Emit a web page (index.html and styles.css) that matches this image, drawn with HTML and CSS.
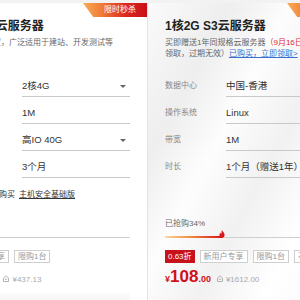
FILE: index.html
```html
<!DOCTYPE html>
<html lang="zh-CN">
<head>
  <meta charset="UTF-8"/>
  <title>云服务器 - 限时秒杀</title>
  <link rel="stylesheet" href="styles.css">
</head>
<body>
  <div class="cards">
    <div class="card card-left">
      <span class="badge">限时秒杀</span>
      <h2 class="title">2核4G云服务器</h2>
      <p class="desc">入门级配置，广泛适用于建站、开发测试等</p>
      <div class="specs">
        <div class="row"><span class="label">配置</span><div class="value select">2核4G<i class="arrow"></i></div></div>
        <div class="row"><span class="label">带宽</span><div class="value">1M</div></div>
        <div class="row"><span class="label">系统盘</span><div class="value select">高IO 40G<i class="arrow"></i></div></div>
        <div class="row"><span class="label">时长</span><div class="value">3个月</div></div>
        <label class="addon"><span class="checkbox"></span>同意并购买<u>主机安全基础版</u></label>
      </div>
      <div class="foot">
        <p class="sold">已抢购0%</p>
        <div class="bar"><span class="fill" style="width:0%"></span></div>
        <div class="tags"><span class="tag">新用户专享</span><span class="tag">限购1台</span></div>
        <div class="price">
          <span class="cur">¥</span><span class="num">48</span><span class="dec">.00</span>
          <span class="save"><svg viewBox="0 0 6 7"><path d="M0.5 3L3 0.8 5.5 3V6.5H0.5Z M1.8 4.2H4.2" fill="none" stroke="#b3b3b3" stroke-width="1"/></svg>¥437.13</span>
        </div>
      </div>
      <div class="buy buy-off"></div>
    </div>

    <div class="card card-right">
      <span class="badge">限时秒杀</span>
      <h2 class="title">1核2G S3云服务器</h2>
      <p class="desc">买即赠送1年同规格云服务器<span class="red">（9月16日前登录控制台</span><br>领取，过期无效）<a href="#">已购买，立即领取&gt;</a></p>
      <div class="specs">
        <div class="row"><span class="label">数据中心</span><div class="value">中国-香港</div></div>
        <div class="row"><span class="label">操作系统</span><div class="value">Linux</div></div>
        <div class="row"><span class="label">带宽</span><div class="value">1M</div></div>
        <div class="row"><span class="label">时长</span><div class="value">1个月（赠送1年）</div></div>
      </div>
      <div class="foot">
        <p class="sold">已抢购34%</p>
        <div class="bar"><span class="fill" style="width:34%"><svg class="flame" viewBox="0 0 6 8"><path d="M3 0C3.6 1.6 5.6 2.8 5.6 5.1 5.6 6.8 4.4 8 3 8 1.6 8 0.4 6.8 0.4 5.2 0.4 3.9 1.2 3.2 1.6 2.6 1.7 3.6 2.1 4.1 2.5 4.3 2.3 2.8 2.6 1.2 3 0Z" fill="#d8141c"/></svg></span></div>
        <div class="tags"><span class="tag tag-red">0.63折</span><span class="tag">新用户专享</span><span class="tag">限购1台</span><span class="tag">不支持退款</span></div>
        <div class="price">
          <span class="cur">¥</span><span class="num">108</span><span class="dec">.00</span>
          <span class="save"><svg viewBox="0 0 6 7"><path d="M0.5 3L3 0.8 5.5 3V6.5H0.5Z M1.8 4.2H4.2" fill="none" stroke="#b3b3b3" stroke-width="1"/></svg>¥1612.00</span>
        </div>
      </div>
      <div class="buy"></div>
    </div>
  </div>
</body>
</html>
```

FILE: styles.css
```css
/* ===== Global ===== */
* { margin:0; padding:0; box-sizing:border-box; }
body {
  font-family:"Liberation Sans","Noto Sans CJK SC",sans-serif;
  background:#f2f2f2; width:300px; height:300px; overflow:hidden;
}

/* ===== Cards ===== */
.cards{display:flex;align-items:flex-start;margin-left:-56px;padding-top:3px;width:420px;}
.card{position:relative;flex:none;width:204px;background:#fff;padding:14px 17px 0;border-right:1px solid #e3e3e3;overflow:hidden;}
.card-right{background:linear-gradient(118deg,#fafafa 0%,#eeeeee 22%,#fdfdfd 38%,#f1f1f1 55%,#fff 72%,#f5f5f5 100%);}
.badge{position:absolute;top:0;right:0;width:64px;height:14px;line-height:14px;padding-left:10px;text-align:center;font-size:8px;color:#fff;
  background:linear-gradient(90deg,#f8ad55 0%,#f07a36 30%,#de2a1f 65%,#c80f1a 100%);
  clip-path:polygon(0 0,100% 0,100% 100%,16% 100%);}
.title{font-size:12px;font-weight:bold;line-height:18px;color:#222;white-space:nowrap;}
.desc{font-size:8px;line-height:11px;height:22px;margin-top:2px;color:#666;white-space:nowrap;}
.desc .red{color:#e0282e;}
.desc a{color:#3a6fd0;text-decoration:underline;}

/* ===== Spec rows ===== */
.specs{height:143px;margin-top:17px;}
.row{display:flex;height:21px;margin-bottom:6px;}
.label{width:61px;flex:none;font-size:8px;line-height:20px;color:#888;}
.value{position:relative;flex:1;font-size:9.5px;line-height:20px;color:#333;border-bottom:1px solid #c9c9c9;white-space:nowrap;}
.arrow{position:absolute;right:4px;top:9px;border:3px solid transparent;border-top:3px solid #666;border-bottom:0;}
.addon{display:flex;align-items:center;gap:4px;margin-top:12px;font-size:8px;line-height:10px;color:#333;white-space:nowrap;}
.addon u{text-decoration:underline;}
.checkbox{width:10px;height:10px;border:1px solid #bbb;background:#fff;}

/* ===== Foot ===== */
.sold{font-size:8px;line-height:10px;color:#666;}
.bar{position:relative;height:1px;margin-top:8px;background:#cfcfcf;}
.fill{position:absolute;left:0;top:-1px;height:2px;background:linear-gradient(90deg,#fbd7a4 0%,#f18b3e 45%,#d8141c 100%);}
.flame{position:absolute;right:-3px;bottom:0;width:6px;height:8px;}
.tags{display:flex;gap:5px;margin-top:12px;white-space:nowrap;}
.tag{height:13px;line-height:11px;padding:0 3px;border:1px solid #cfcfcf;font-size:8px;color:#999;background:#fff;}
.tag-red{background:#c8121b;border-color:#c8121b;color:#fff;padding:0 2px;}
.price{display:flex;align-items:baseline;margin-top:5px;line-height:18px;color:#d0101a;font-weight:bold;white-space:nowrap;}
.cur{font-size:9px;}
.num{font-size:17px;}
.dec{font-size:9px;}
.save{display:flex;align-items:baseline;gap:3px;margin-left:6px;font-size:8px;font-weight:normal;color:#aaa;}
.save svg{width:6px;height:7px;}
.buy{height:30px;margin-top:11px;background:linear-gradient(90deg,#f07a2a,#e0301e 60%,#d0101a);}
.buy-off{margin-top:4px;background:linear-gradient(#fbfbfb,#e9e9e9);}
```
